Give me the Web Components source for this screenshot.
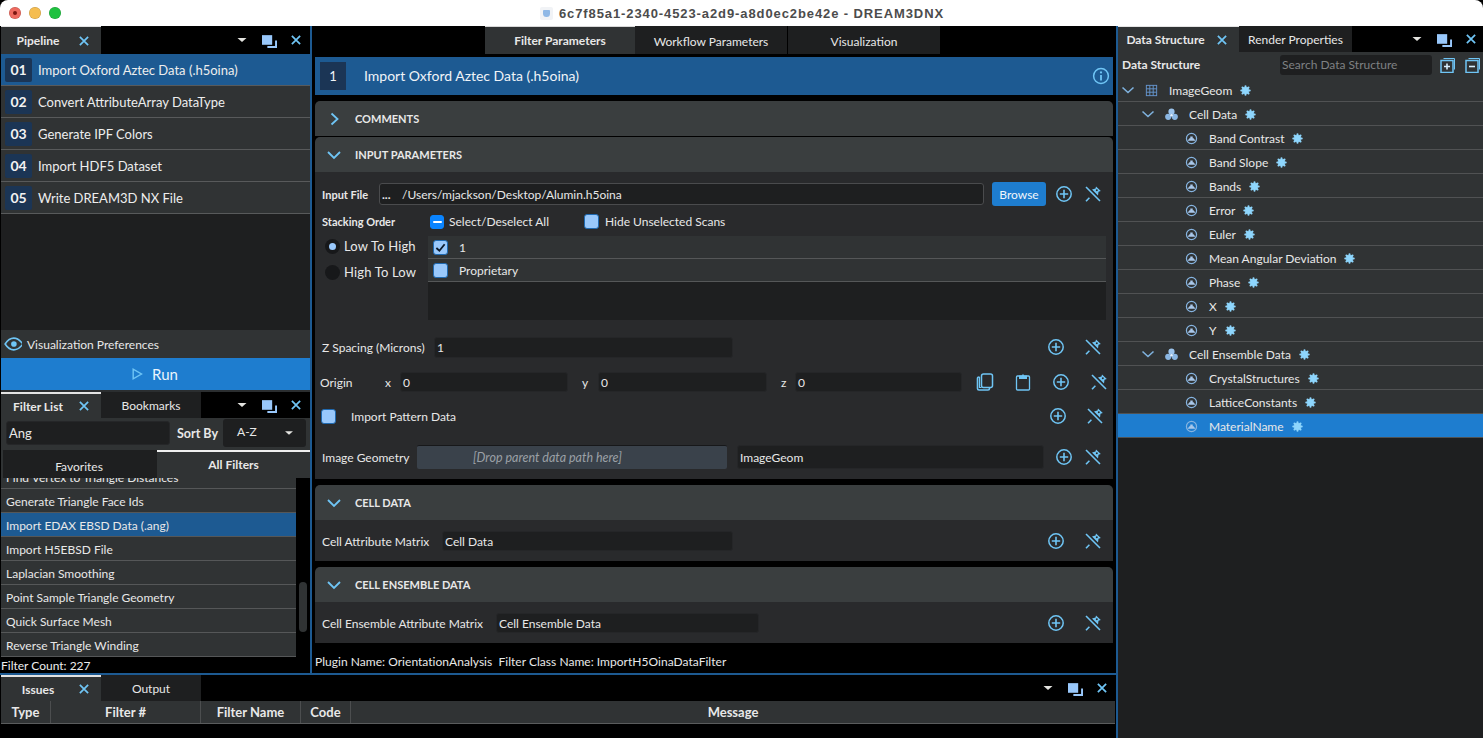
<!DOCTYPE html>
<html>
<head>
<meta charset="utf-8">
<title>DREAM3DNX</title>
<style>
  html, body { margin: 0; padding: 0; background: #000; height: 738px; overflow: hidden; }
  body { font-family: Lato, "Liberation Sans", sans-serif; color: #e8e8e8; }
</style>
</head>
<body>

<dream-app>
  <window-titlebar slot="title" text="6c7f85a1-2340-4523-a2d9-a8d0ec2be42e - DREAM3DNX"></window-titlebar>

  <!-- left column -->
  <pipeline-panel slot="left"></pipeline-panel>
  <filter-panel slot="left"></filter-panel>

  <!-- center column -->
  <parameters-panel slot="center">
    <param-section title="Comments" closed></param-section>
    <param-section title="Input Parameters" tight>
      <param-row label="Input File" label-w="57" h="26" plus-gap="29" style="margin-top:9px">
        <text-field value="/Users/mjackson/Desktop/Alumin.h5oina" prefix="..." w="605" h="22" lit></text-field>
        <ui-button style="margin-left:8px">Browse</ui-button>
      </param-row>
      <stacking-block style="margin-top:5px"></stacking-block>
      <param-row label="Z Spacing (Microns)" label-w="112" h="22" plus-gap="37" style="margin-top:16px">
        <text-field value="1" w="299" h="21"></text-field>
      </param-row>
      <param-row label="Origin" label-w="65" h="22" plus-gap="38" end="5" shift="-2" style="margin-top:13px">
        <axis-label w="15">x</axis-label><text-field value="0" w="168" h="20"></text-field>
        <axis-label w="30">y</axis-label><text-field value="0" w="169" h="20"></text-field>
        <axis-label w="28">z</axis-label><text-field value="0" w="167" h="20"></text-field>
        <ui-icon name="copy" size="18" style="margin-left:14px"></ui-icon>
        <ui-icon name="clipboard" size="18" style="margin-left:20px"></ui-icon>
      </param-row>
      <param-row h="22" plus-gap="37" end="9" shift="-1" style="margin-top:12px">
        <ui-check state="off"></ui-check>
        <field-text style="margin-left:15px">Import Pattern Data</field-text>
      </param-row>
      <param-row label="Image Geometry" label-w="95" h="24" plus-gap="29" style="margin-top:18px;margin-bottom:10px">
        <drop-target w="310">[Drop parent data path here]</drop-target>
        <text-field value="ImageGeom" w="307" h="24" style="margin-left:10px"></text-field>
      </param-row>
    </param-section>
    <param-section title="Cell Data">
      <param-row label="Cell Attribute Matrix" label-w="120" h="20" plus-gap="37" style="margin:11px 0 10px">
        <text-field value="Cell Data" w="291" h="20"></text-field>
      </param-row>
    </param-section>
    <param-section title="Cell Ensemble Data">
      <param-row label="Cell Ensemble Attribute Matrix" label-w="174" h="20" plus-gap="37" style="margin:11px 0 10px">
        <text-field value="Cell Ensemble Data" w="263" h="20"></text-field>
      </param-row>
    </param-section>
  </parameters-panel>

  <!-- bottom dock -->
  <issues-panel slot="bottom"></issues-panel>

  <!-- right column -->
  <data-structure-panel slot="right">
    <tree-row depth="0" icon="grid" open>ImageGeom</tree-row>
    <tree-row depth="1" icon="group" open>Cell Data</tree-row>
    <tree-row depth="2" icon="array">Band Contrast</tree-row>
    <tree-row depth="2" icon="array">Band Slope</tree-row>
    <tree-row depth="2" icon="array">Bands</tree-row>
    <tree-row depth="2" icon="array">Error</tree-row>
    <tree-row depth="2" icon="array">Euler</tree-row>
    <tree-row depth="2" icon="array">Mean Angular Deviation</tree-row>
    <tree-row depth="2" icon="array">Phase</tree-row>
    <tree-row depth="2" icon="array">X</tree-row>
    <tree-row depth="2" icon="array">Y</tree-row>
    <tree-row depth="1" icon="group" open>Cell Ensemble Data</tree-row>
    <tree-row depth="2" icon="array">CrystalStructures</tree-row>
    <tree-row depth="2" icon="array">LatticeConstants</tree-row>
    <tree-row depth="2" icon="array" selected>MaterialName</tree-row>
  </data-structure-panel>
</dream-app>

<script>
// Base class: every element renders its markup into an open shadow root
class Element_ extends HTMLElement {
  constructor() {
    super();
    this.shadow = this.attachShadow({ mode: 'open' });
  }
  connectedCallback() {
    this.shadow.innerHTML = `<style>${this.css()}</style>${this.html()}`;
  }
  css() { return ':host{display:block}'; }
  html() { return '<slot></slot>'; }
  attr(name, fallback = '') {
    return this.hasAttribute(name) ? this.getAttribute(name) : fallback;
  }
}

const BLUE = '#6fc5f5';
const LIGHT = '#99c8fb';

const ICONS = {
  close: `<path d="M2.500 2.500l11 11M13.500 2.500l-11 11" stroke="${BLUE}" stroke-width="2.300" fill="none"/>`,
  float: `<path d="M0 2h9.500v9H0z" fill="${LIGHT}"/><path d="M14 7v7H5v-1.800h7.200V7z" fill="${LIGHT}"/>`,
  caret: `<path d="M3.500 6h9L8 10z" fill="#e4e4e0"/>`,
  right: `<path d="M5.500 2.500L11.500 8l-6 5.500" stroke="${BLUE}" stroke-width="1.800" fill="none"/>`,
  down: `<path d="M2 5l6 6 6-6" stroke="${BLUE}" stroke-width="1.800" fill="none"/>`,
  treedown: `<path d="M2.500 5.500L8 10.500l5.500-5" stroke="#7fb2de" stroke-width="1.600" fill="none"/>`,
  plus: `<circle cx="9" cy="9" r="7.200" stroke="${BLUE}" stroke-width="1.500" fill="none"/><path d="M9 4.800v8.400M4.800 9h8.400" stroke="${BLUE}" stroke-width="1.600"/>`,
  pin: `<path d="M2 2l14 14" stroke="${BLUE}" stroke-width="1.600"/><path d="M8 4.600l3.500-1 .5-2.100 4.800 4.500-2.300.8-.5 3.700z" fill="${BLUE}"/><circle cx="12.800" cy="5.300" r="1" fill="#292a2c"/><path d="M2 16.200l3.400-3.400" stroke="${BLUE}" stroke-width="1.600"/>`,
  info: `<circle cx="9" cy="9" r="7.400" stroke="${BLUE}" stroke-width="1.500" fill="none"/><path d="M9 8v5.400" stroke="${BLUE}" stroke-width="1.800"/><circle cx="9" cy="5.400" r="1.100" fill="${BLUE}"/>`,
  copy: `<rect x="5.500" y="1" width="11" height="13.500" rx="2" stroke="${BLUE}" stroke-width="1.500" fill="none"/><path d="M3.500 4H3a1.500 1.500 0 0 0-1.500 1.500v10A1.500 1.500 0 0 0 3 17h9a1.500 1.500 0 0 0 1.500-1.500V15" stroke="${BLUE}" stroke-width="1.600" fill="none"/><path d="M3.500 4v10.500h2" stroke="${BLUE}" stroke-width="1.200" fill="none"/>`,
  clipboard: `<rect x="2.500" y="3" width="13" height="14" rx="1" stroke="${BLUE}" stroke-width="1.300" fill="none"/><path d="M5 2.500h3L9 .8l1 1.700h3V6H5z" fill="${BLUE}"/>`,
  eye: `<path d="M1 8c2.400-3.700 5-5.200 7.700-5.200S14 4.300 16.800 8c-2.800 3.700-5.400 5.200-8.100 5.200S3.400 11.700 1 8z" stroke="${BLUE}" stroke-width="1.400" fill="none"/><circle cx="8.800" cy="8" r="2.500" fill="${BLUE}"/>`,
  run: `<path d="M2.500 2.500v11l9.500-5.500z" stroke="${BLUE}" stroke-width="1.600" fill="none"/>`,
  expand: `<path d="M3.500 1.500h11v11" stroke="${BLUE}" stroke-width="1" fill="none"/><rect x="1" y="3.500" width="12" height="12" stroke="${BLUE}" stroke-width="1.500" fill="none"/><path d="M7 6.500v6M4 9.500h6" stroke="#d8f0ff" stroke-width="1.600"/>`,
  collapse: `<path d="M3.500 1.500h11v11" stroke="${BLUE}" stroke-width="1" fill="none"/><rect x="1" y="3.500" width="12" height="12" stroke="${BLUE}" stroke-width="1.500" fill="none"/><path d="M4 9.500h6" stroke="#d8f0ff" stroke-width="1.600"/>`,
  grid: `<rect x="2.500" y="2.500" width="11" height="11" stroke="#6596cf" stroke-width="1" fill="none"/><path d="M6.200 2.500v11M9.800 2.500v11M2.500 6.200h11M2.500 9.800h11" stroke="#6596cf" stroke-width="1"/>`,
  group: `<circle cx="8" cy="5" r="3.300" fill="#9cc4ec"/><circle cx="4.500" cy="10.500" r="3.300" fill="#8ab6e2"/><circle cx="11.500" cy="10.500" r="3.300" fill="#8ab6e2"/><circle cx="8" cy="8.800" r="1.300" fill="#e6f2ff"/>`,
  array: `<circle cx="8" cy="8" r="5.400" stroke="#86b4e0" stroke-width="1.300" fill="none"/><path d="M3.800 10.300l2-2.500h.9V5.800h2.600v2h.9l2 2.500z" fill="#a9c8ea"/>`,
  gear: `<g stroke="#8ed6fd" stroke-width="2.500" stroke-linecap="round"><path d="M8 2.800v10.400M2.800 8h10.400M4.300 4.300l7.400 7.400M11.700 4.300l-7.400 7.400"/></g><circle cx="8" cy="8" r="4.200" fill="#8ed6fd"/>`
};

const VIEWBOX = { plus: 18, pin: 18, info: 18, copy: 18, clipboard: 18 };

class UiIcon extends Element_ {
  css() {
    const s = this.attr('size', '16');
    return `:host{display:inline-flex;flex:none;width:${s}px;height:${s}px}svg{display:block;width:100%;height:100%}`;
  }
  html() {
    const name = this.attr('name');
    const box = VIEWBOX[name] || (name === 'float' ? 14 : 16);
    return `<svg viewBox="0 0 ${box} ${box}" xmlns="http://www.w3.org/2000/svg">${ICONS[name] || ''}</svg>`;
  }
}

class WindowTitlebar extends Element_ {
  css() {
    return `:host{display:flex;align-items:center;height:26px;background:#fff;border-radius:8px 8px 0 0}
      .lights{display:flex;gap:8px;padding-left:9px}
      .l{width:12px;height:12px;border-radius:50%;box-shadow:inset 0 0 0 .5px rgba(0,0,0,.2)}
      .r{background:#ee6a5f;display:flex;align-items:center;justify-content:center}
      .r::after{content:"";width:4px;height:4px;border-radius:50%;background:#7a1510}
      .y{background:#f5bd4f}.g{background:#1fc140}
      .t{flex:1;display:flex;justify-content:center;align-items:center;gap:6px;padding-right:60px;
         font:bold 13px "Liberation Sans",sans-serif;letter-spacing:.9px;color:#4c4c4c}
      .doc{width:13px;height:13px;background:#f1f3f6;border-radius:2px;display:flex;align-items:center;justify-content:center}
      .doc i{width:7px;height:7px;background:#8fb8e6;border-radius:1px 1px 4px 4px}`;
  }
  html() {
    return `<div class="lights"><span class="l r"></span><span class="l y"></span><span class="l g"></span></div>
      <div class="t"><span class="doc"><i></i></span><span>${this.attr('text')}</span></div>`;
  }
}

class DreamApp extends Element_ {
  css() {
    return `:host{display:grid;grid-template-columns:1116px 367px;grid-template-rows:26px 712px;height:738px;background:#000}
      .title{grid-column:1 / 3}
      .leftside{display:grid;grid-template-rows:647px 2px 63px}
      .top{display:grid;grid-template-columns:310px 2px 804px;min-height:0}
      .col{display:flex;flex-direction:column;padding-left:1px;box-sizing:border-box;min-height:0}
      .vline,.hline{background:#1d5a92}
      .right{display:grid;grid-template-columns:2px 365px;min-height:0}
      .center{min-width:0}`;
  }
  html() {
    return `<div class="title"><slot name="title"></slot></div>
      <div class="leftside">
        <div class="top">
          <div class="col"><slot name="left"></slot></div>
          <div class="vline"></div>
          <div class="center"><slot name="center"></slot></div>
        </div>
        <div class="hline"></div>
        <div><slot name="bottom"></slot></div>
      </div>
      <div class="right"><div class="vline"></div><div><slot name="right"></slot></div></div>`;
  }
}

// tab strip with float/close controls
class DockTabs extends Element_ {
  css() {
    return `:host{display:flex;height:${this.attr('h', '28')}px;background:#000;font-size:12px;color:#e8e8e8}
      .tab{display:flex;align-items:center;box-sizing:border-box;background:#1e1f20;justify-content:center;flex:none}
      .tab.on{background:#303334;border-top:${this.attr('line', '1')}px solid #e4e4e4;font-weight:700;padding-right:11px}
      .tab.on span{flex:1;text-align:center;padding-right:3px}
      .ctl{margin-left:auto;display:flex;align-items:center;padding-right:${this.attr('end', '8')}px}
      .ctl ui-icon[name=caret]{margin-right:12px}
      .ctl ui-icon[name=float]{margin-right:13px}`;
  }
  html() {
    const labels = this.attr('tabs').split('|');
    const widths = this.attr('widths').split('|');
    const tabs = labels.map((t, i) => i === 0
      ? `<div class="tab on" style="width:${widths[i]}px"><span>${t}</span><ui-icon name="close" size="12"></ui-icon></div>`
      : `<div class="tab" style="width:${widths[i]}px"><span>${t}</span></div>`).join('');
    return `${tabs}<div class="ctl"><ui-icon name="caret" size="16"></ui-icon><ui-icon name="float" size="15"></ui-icon><ui-icon name="close" size="12"></ui-icon></div>`;
  }
}

class PipelineRow extends Element_ {
  css() {
    return `:host{display:flex;align-items:center;height:32px;box-sizing:border-box;background:#303334;border-bottom:1px solid #585a5b;font-size:13px;color:#eee}
      :host([selected]){background:#1d5a92}
      b{width:27px;height:24px;margin:0 6px 0 4px;background:#1b3555;border-radius:2px;display:flex;align-items:center;justify-content:center;font-size:14px;font-weight:700;color:#f2f2f2}`;
  }
  html() {
    return `<b>${this.attr('num')}</b><span><slot></slot></span>`;
  }
}

class PipelinePanel extends Element_ {
  css() {
    return `:host{display:flex;flex-direction:column;height:366px;background:#1e1f20}
      .fill{flex:1}
      .viz{height:28px;background:#303334;display:flex;align-items:center;font-size:12px;padding-left:3px;gap:5px}
      .run{height:32px;background:#1e7dcf;display:flex;align-items:center;justify-content:center;gap:7px;font-size:15px;color:#eaf4fc}
      .run ui-icon{margin-left:-2px}
      .gap{height:2px;background:#2b2e30}`;
  }
  html() {
    const rows = ['Import Oxford Aztec Data (.h5oina)', 'Convert AttributeArray DataType', 'Generate IPF Colors', 'Import HDF5 Dataset', 'Write DREAM3D NX File'];
    return `<dock-tabs tabs="Pipeline" widths="100" h="28" end="8"></dock-tabs>
      ${rows.map((r, i) => `<pipeline-row num="0${i + 1}" ${i === 0 ? 'selected' : ''}>${r}</pipeline-row>`).join('')}
      <div class="fill"></div>
      <div class="viz"><ui-icon name="eye" size="18"></ui-icon><span>Visualization Preferences</span></div>
      <div class="run"><ui-icon name="run" size="14"></ui-icon><span>Run</span></div>
      <div class="gap"></div>`;
  }
}

class ListRow extends Element_ {
  css() {
    return `:host{display:flex;align-items:center;height:24px;box-sizing:border-box;padding:1px 0 0 5px;background:#303334;border-bottom:1px solid #555758;font-size:12px;color:#e8e8e8;white-space:nowrap}
      :host([selected]){background:#1d5a92}`;
  }
}

class FilterPanel extends Element_ {
  css() {
    return `:host{display:flex;flex-direction:column;height:281px;font-size:12px}
      .search{height:32px;background:#303334;display:flex;align-items:center;box-sizing:border-box;padding-bottom:2px}
      .search text-field{margin-left:5px}
      .sort{font-weight:700;font-size:12.500px;margin-left:7px}
      .select{margin-left:5px;width:83px;height:28px;background:#1e1f20;border-radius:3px;display:flex;align-items:center;padding:0 0 3px 14px;box-sizing:border-box;justify-content:space-between}
      .select ui-icon{margin:3px 10px 0 0}
      .tabs{display:flex;height:28px;background:#303334;padding-left:2px}
      .tabs div{display:flex;align-items:center;justify-content:center;box-sizing:border-box}
      .fav{width:154px;background:#1e1f20;padding:4px 2px 0 0}
      .all{flex:1;border-top:2px solid #f0f0f0;font-weight:700;padding-bottom:2px}
      .body{height:180px;display:flex;overflow:hidden;background:#000}
      .list{width:295px;flex:none}
      .list list-row:first-child{margin-top:-13px}
      .thumb{width:8px;height:50px;margin:104px 0 0 3px;background:#303334;border-radius:4px}
      .count{height:15px;line-height:15px;color:#eee}`;
  }
  html() {
    const rows = ['Find Vertex to Triangle Distances', 'Generate Triangle Face Ids', 'Import EDAX EBSD Data (.ang)', 'Import H5EBSD File', 'Laplacian Smoothing', 'Point Sample Triangle Geometry', 'Quick Surface Mesh', 'Reverse Triangle Winding'];
    return `<dock-tabs tabs="Filter List|Bookmarks" widths="100|100" h="26" line="2" end="8"></dock-tabs>
      <div class="search"><text-field value="Ang" w="164" h="24" big></text-field><span class="sort">Sort By</span>
        <div class="select"><span>A-Z</span><ui-icon name="caret" size="14"></ui-icon></div></div>
      <div class="tabs"><div class="fav">Favorites</div><div class="all">All Filters</div></div>
      <div class="body"><div class="list">${rows.map((r, i) => `<list-row ${i === 2 ? 'selected' : ''}>${r}</list-row>`).join('')}</div><div class="thumb"></div></div>
      <div class="count">Filter Count: 227</div>`;
  }
}

class TextField extends Element_ {
  css() {
    const lit = this.hasAttribute('lit');
    return `:host{display:flex;flex:none;align-items:center;box-sizing:border-box;width:${this.attr('w', '100')}px;height:${this.attr('h', '20')}px;
        background:#1e1f20;border:1px solid ${lit ? '#4a4b4d' : '#252628'};border-radius:3px;font-size:${this.hasAttribute('big') ? 13 : 12}px;color:#e8e8e8;padding-left:2px;white-space:nowrap;overflow:hidden}
      .pre{font-weight:700;width:20px;flex:none}`;
  }
  html() {
    const pre = this.attr('prefix');
    return `${pre ? `<span class="pre">${pre}</span>` : ''}<span>${this.attr('value')}</span>`;
  }
}

class UiButton extends Element_ {
  css() {
    return `:host{display:flex;flex:none;align-items:center;justify-content:center;width:54px;height:24px;background:#1e7dcf;border-radius:3px;font-size:12px;color:#f0f6fb}`;
  }
}

class AxisLabel extends Element_ {
  css() {
    return `:host{display:block;flex:none;width:${this.attr('w')}px;font-size:12px;color:#e8e8e8;box-sizing:border-box;padding-left:${this.attr('w') > 20 ? 14 : 0}px}`;
  }
}

class FieldText extends Element_ {
  css() { return ':host{display:block;font-size:12px;color:#e8e8e8;white-space:nowrap}'; }
}

class DropTarget extends Element_ {
  css() {
    return `:host{display:flex;flex:none;align-items:center;padding-left:56px;box-sizing:border-box;width:${this.attr('w')}px;height:24px;background:#3a424b;border-top:1px solid #17181a;border-radius:2px;font-size:12.500px;font-style:italic;color:#9aa0a6;white-space:nowrap}`;
  }
}

class UiCheck extends Element_ {
  css() {
    return `:host{display:flex;flex:none;align-items:center;justify-content:center;box-sizing:border-box;width:15px;height:15px;border-radius:3px;background:${LIGHT};border:1px solid #1f69b0}
      :host([state=minus]){background:#0a84ff;border-color:#0a84ff;width:14px;height:14px}
      i{display:block;width:9px;height:2px;background:#fff;border-radius:1px}
      svg{display:block;width:11px;height:11px}`;
  }
  html() {
    const s = this.attr('state');
    if (s === 'minus') return '<i></i>';
    if (s === 'on') return '<svg viewBox="0 0 12 12"><path d="M1.500 6.500L4.800 9.500 10.500 2.500" stroke="#0c1a2b" stroke-width="2" fill="none"/></svg>';
    return '';
  }
}

class StackingBlock extends Element_ {
  css() {
    return `:host{display:grid;grid-template-columns:106px 678px;grid-template-rows:20px 84px;row-gap:4px;padding-left:7px;font-size:12px;color:#e8e8e8}
      .lab{font-weight:700;font-size:11px;display:flex;align-items:center;padding-bottom:1px}
      .top{display:flex;align-items:center;padding:0 0 1px 2px}
      .top span{margin-left:6px}
      .top span.a{width:136px;margin-left:5px}
      .top ui-check:nth-of-type(2){margin-left:-1px}
      .radios{display:flex;flex-direction:column;gap:6px;padding-left:3px;font-size:13px}
      .radio{display:flex;align-items:center;height:20px;gap:4px;letter-spacing:.15px}
      .radio i{width:15px;height:15px;border-radius:50%;background:#17181a;display:flex;align-items:center;justify-content:center}
      .radio.on i::after{content:"";width:7px;height:7px;border-radius:50%;background:${LIGHT}}
      .table{background:#1e1f20}
      .r{display:flex;align-items:center;height:23px;box-sizing:border-box;background:#303334;border-bottom:1px solid #555758;padding-left:5px}
      .r span{margin-left:11px}`;
  }
  html() {
    return `<div class="lab">Stacking Order</div>
      <div class="top"><ui-check state="minus"></ui-check><span class="a">Select/Deselect All</span><ui-check state="off"></ui-check><span>Hide Unselected Scans</span></div>
      <div class="radios"><div class="radio on"><i></i>Low To High</div><div class="radio"><i></i>High To Low</div></div>
      <div class="table"><div class="r"><ui-check state="on"></ui-check><span>1</span></div><div class="r"><ui-check state="off"></ui-check><span>Proprietary</span></div></div>`;
  }
}

class ParamRow extends Element_ {
  css() {
    return `:host{display:flex;align-items:center;height:${this.attr('h', '22')}px;padding:0 ${this.attr('end', '11')}px 0 ${7 + Number(this.attr('shift', '0'))}px;font-size:12px;color:#e8e8e8}
      .label{flex:none;width:${this.attr('label-w', '0')}px;white-space:nowrap}
      .label.strong{font-weight:700;font-size:11px}
      .actions{margin-left:auto;display:flex;align-items:center;gap:${Number(this.attr('plus-gap', '37')) - 18}px}`;
  }
  html() {
    const strong = this.attr('label') === 'Input File' ? 'strong' : '';
    const label = this.hasAttribute('label') ? `<span class="label ${strong}">${this.attr('label')}</span>` : '';
    return `${label}<slot></slot><div class="actions"><ui-icon name="plus" size="18"></ui-icon><ui-icon name="pin" size="18"></ui-icon></div>`;
  }
}

class ParamSection extends Element_ {
  css() {
    return `:host{display:block;margin-top:6px}
      :host([tight]){margin-top:1px}
      .head{height:35px;background:#3a3e3f;border-radius:5px 5px 0 0;display:flex;align-items:center;padding-left:11px;font-size:11px;font-weight:700;text-transform:uppercase;color:#e8e8e8}
      .head span{margin-left:13px}
      .body{background:#292a2c;display:flow-root}
      :host([closed]) .body{display:none}`;
  }
  html() {
    const closed = this.hasAttribute('closed');
    return `<div class="head"><ui-icon name="${closed ? 'right' : 'down'}" size="16"></ui-icon><span>${this.attr('title')}</span></div>
      <div class="body"><slot></slot></div>`;
  }
}

class ParametersPanel extends Element_ {
  css() {
    return `:host{display:flex;flex-direction:column;height:647px;background:#000}
      .tabs{display:flex;height:28px;padding-left:173px;font-size:12px;color:#e8e8e8}
      .tabs div{display:flex;align-items:center;justify-content:center;background:#1e1f20;padding-top:2px;box-sizing:border-box}
      .tabs .on{background:#303334;border-top:1px solid #d8d8d8;font-weight:700;padding-top:0}
      .wrap{padding:3px 3px 0}
      .banner{height:38px;background:#1d5a92;display:flex;align-items:center;font-size:14px;color:#f0f4f8;padding-right:3px}
      .num{width:26px;height:28px;margin-left:5px;background:#1b3555;display:flex;align-items:center;justify-content:center;font-size:13px}
      .name{margin-left:18px;flex:1;padding-bottom:2px}
      .foot{font-size:12px;color:#e8e8e8;height:30px;line-height:38px;white-space:pre;letter-spacing:.03px}`;
  }
  html() {
    return `<div class="tabs"><div class="on" style="width:150px">Filter Parameters</div><div style="width:152px;margin-right:1px">Workflow Parameters</div><div style="width:152px">Visualization</div></div>
      <div class="wrap">
        <div class="banner"><span class="num">1</span><span class="name">Import Oxford Aztec Data (.h5oina)</span><ui-icon name="info" size="18"></ui-icon></div>
        <slot></slot>
        <div class="foot">Plugin Name: OrientationAnalysis  Filter Class Name: ImportH5OinaDataFilter</div>
      </div>`;
  }
}

class IssuesPanel extends Element_ {
  css() {
    return `:host{display:block;padding-left:1px;font-size:12px}
      .head{display:flex;height:23px;box-sizing:border-box;background:#303334;border-bottom:1px solid #5a5c5d;font-weight:700;font-size:13px;margin-right:1px}
      .head div{display:flex;align-items:center;justify-content:center;box-sizing:border-box;border-right:1px solid #4c4e4f;flex:none}
      .head div:last-child{flex:1;border:none}`;
  }
  html() {
    return `<dock-tabs tabs="Issues|Output" widths="100|100" h="26" line="2" end="8"></dock-tabs>
      <div class="head"><div style="width:50px">Type</div><div style="width:150px">Filter #</div><div style="width:100px">Filter Name</div><div style="width:50px">Code</div><div>Message</div></div>`;
  }
}

class TreeRow extends Element_ {
  css() {
    return `:host{display:flex;align-items:center;height:24px;box-sizing:border-box;background:#303334;border-bottom:1px solid #505253;font-size:12px;color:#e8e8e8;padding:1px 0 0 ${this.attr('depth') * 20}px;white-space:nowrap}
      :host([selected]){background:#1e7dcf}
      .chev{width:20px;height:16px;margin-right:3px;display:flex;justify-content:center;flex:none}
      .ico{width:20px;display:flex;justify-content:center;margin-right:8px;flex:none}
      .gear{margin-left:7px;display:flex}`;
  }
  html() {
    const chev = this.hasAttribute('open') ? '<ui-icon name="treedown" size="16"></ui-icon>' : '';
    return `<span class="chev">${chev}</span><span class="ico"><ui-icon name="${this.attr('icon')}" size="15"></ui-icon></span><span><slot></slot></span><span class="gear"><ui-icon name="gear" size="13"></ui-icon></span>`;
  }
}

class DataStructurePanel extends Element_ {
  css() {
    return `:host{display:flex;flex-direction:column;height:712px;background:#1e1f20;font-size:12px}
      .bar{height:26px;background:#303334;display:flex;align-items:center;padding:0 0 1px 4px;box-sizing:border-box}
      .bar b{width:158px}
      .search{width:152px;height:20px;background:#1e1f20;border-radius:3px;display:flex;align-items:center;padding-left:2px;box-sizing:border-box;color:#7f8183;flex:none}
      .bar ui-icon{margin-left:8px}
      .bar ui-icon + ui-icon{margin-left:9px}`;
  }
  html() {
    return `<dock-tabs tabs="Data Structure|Render Properties" widths="121|113" h="26" end="6"></dock-tabs>
      <div class="bar"><b>Data Structure</b><div class="search">Search Data Structure</div><ui-icon name="expand" size="16"></ui-icon><ui-icon name="collapse" size="16"></ui-icon></div>
      <slot></slot>`;
  }
}

customElements.define('ui-icon', UiIcon);
customElements.define('window-titlebar', WindowTitlebar);
customElements.define('dream-app', DreamApp);
customElements.define('dock-tabs', DockTabs);
customElements.define('pipeline-row', PipelineRow);
customElements.define('pipeline-panel', PipelinePanel);
customElements.define('list-row', ListRow);
customElements.define('filter-panel', FilterPanel);
customElements.define('text-field', TextField);
customElements.define('ui-button', UiButton);
customElements.define('axis-label', AxisLabel);
customElements.define('field-text', FieldText);
customElements.define('drop-target', DropTarget);
customElements.define('ui-check', UiCheck);
customElements.define('stacking-block', StackingBlock);
customElements.define('param-row', ParamRow);
customElements.define('param-section', ParamSection);
customElements.define('parameters-panel', ParametersPanel);
customElements.define('issues-panel', IssuesPanel);
customElements.define('tree-row', TreeRow);
customElements.define('data-structure-panel', DataStructurePanel);
</script>
</body>
</html>
